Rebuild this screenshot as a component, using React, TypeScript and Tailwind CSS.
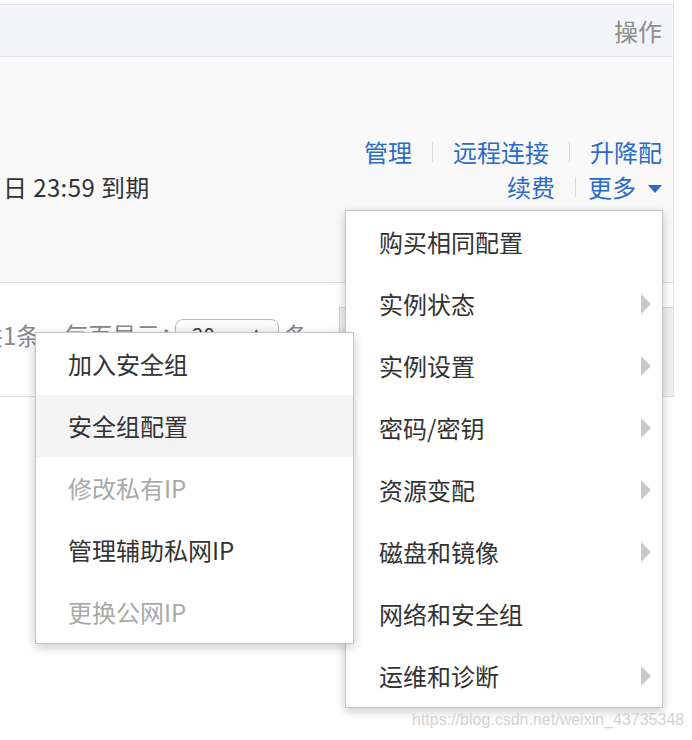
const MORE_MENU: { label: string; sub?: boolean }[] = [
  { label: "购买相同配置" },
  { label: "实例状态", sub: true },
  { label: "实例设置", sub: true },
  { label: "密码/密钥", sub: true },
  { label: "资源变配", sub: true },
  { label: "磁盘和镜像", sub: true },
  { label: "网络和安全组" },
  { label: "运维和诊断", sub: true },
];

const NET_MENU: { label: string; disabled?: boolean; active?: boolean }[] = [
  { label: "加入安全组" },
  { label: "安全组配置", active: true },
  { label: "修改私有IP", disabled: true },
  { label: "管理辅助私网IP" },
  { label: "更换公网IP", disabled: true },
];

function Sep({ className = "mx-[20px]" }: { className?: string }) {
  return <span className={`inline-block w-px h-[20px] bg-[#d9d9d9] ${className}`} />;
}

function SubArrow() {
  return (
    <svg width="10" height="20" viewBox="0 0 10 20" className="shrink-0">
      <polygon points="0,0 10,10 0,20" fill="#c9c9c9" />
    </svg>
  );
}

export default function App() {
  return (
    <div
      className="relative w-[692px] h-[740px] overflow-hidden bg-white text-[24px] text-[#333]"
      style={{ fontFamily: '"Noto Sans CJK SC", "Noto Sans", sans-serif' }}
    >
      <div className="pt-[4px] w-[674px] border-r border-[#dfe1e6]">
        {/* 表头 */}
        <div className="h-[53px] bg-[#f4f5f9] border-t border-b border-[#e1e3e8] flex items-center justify-end pr-[11px]">
          <span className="text-[#8c8c8c] leading-none">操作</span>
        </div>

        {/* 实例行 */}
        <div className="h-[226px] bg-[#f9f9f9] border-b border-[#dcdde1] flex justify-between pt-[77px]">
          <div className="pt-[35px] pl-[3px] leading-[35px] whitespace-nowrap tracking-[0.4px]">日 23:59 到期</div>
          <div className="pr-[11px] leading-[35px] text-[#2a6bc9] flex flex-col items-end">
            <div className="flex items-center">
              <span>管理</span>
              <Sep />
              <span>远程连接</span>
              <Sep />
              <span>升降配</span>
            </div>
            <div className="flex items-center">
              <span>续费</span>
              <Sep className="ml-[20px] mr-[12px]" />
              <span>更多</span>
              <svg width="14" height="8" viewBox="0 0 14 8" className="ml-[12px] mt-[4px]">
                <polygon points="0,0 14,0 7,8" fill="#2a6bc9" />
              </svg>
            </div>
          </div>
        </div>

        {/* 分页 */}
        <div className="h-[114px] border-b border-[#dcdde1] flex items-start justify-between">
          <div className="mt-[36px] flex items-center h-[32px] ml-[-21px] text-[#888] whitespace-nowrap">
            <span>共1条，每页显示：</span>
            <div className="ml-[-9px] w-[104px] h-[32px] rounded-[8px] border border-[#b9b9b9] bg-gradient-to-b from-white to-[#e6e6e6] flex items-center justify-between px-[16px] text-[20px] text-[#333]">
              <span>20</span>
              <span className="text-[12px] text-[#444]">▲</span>
            </div>
            <span className="ml-[5px]">条</span>
          </div>
          <div className="mt-[24px] w-[334px] h-[89px] border border-r-0 border-b-0 border-[#cfd3da] bg-[#f1f1f1]" />
        </div>
      </div>

      {/* 更多 下拉菜单 */}
      <div className="absolute left-[345px] top-[210px] w-[318px] bg-white border border-[#c6c6c6] shadow-[0_3px_10px_rgba(0,0,0,0.22)]">
        {MORE_MENU.map((item) => (
          <div key={item.label} className="h-[62px] flex items-center justify-between pl-[33px] pr-[11px] whitespace-nowrap">
            <span>{item.label}</span>
            {item.sub && <SubArrow />}
          </div>
        ))}
      </div>

      {/* 网络和安全组 子菜单 */}
      <div className="absolute left-[35px] top-[332px] w-[319px] bg-white border border-[#c6c6c6] shadow-[0_3px_10px_rgba(0,0,0,0.22)]">
        {NET_MENU.map((item) => (
          <div
            key={item.label}
            className={`h-[62px] flex items-center pl-[32px] whitespace-nowrap ${item.active ? "bg-[#f4f4f4]" : ""} ${
              item.disabled ? "text-[#a9a9a9]" : "text-[#333]"
            }`}
          >
            {item.label}
          </div>
        ))}
      </div>

      <div
        className="absolute left-[412px] top-[711px] text-[16px] leading-[18px] text-[#d2d2d2] whitespace-nowrap"
        style={{ fontFamily: '"Liberation Sans", Arial, sans-serif' }}
      >
        https://blog.csdn.net/weixin_43735348
      </div>
    </div>
  );
}
